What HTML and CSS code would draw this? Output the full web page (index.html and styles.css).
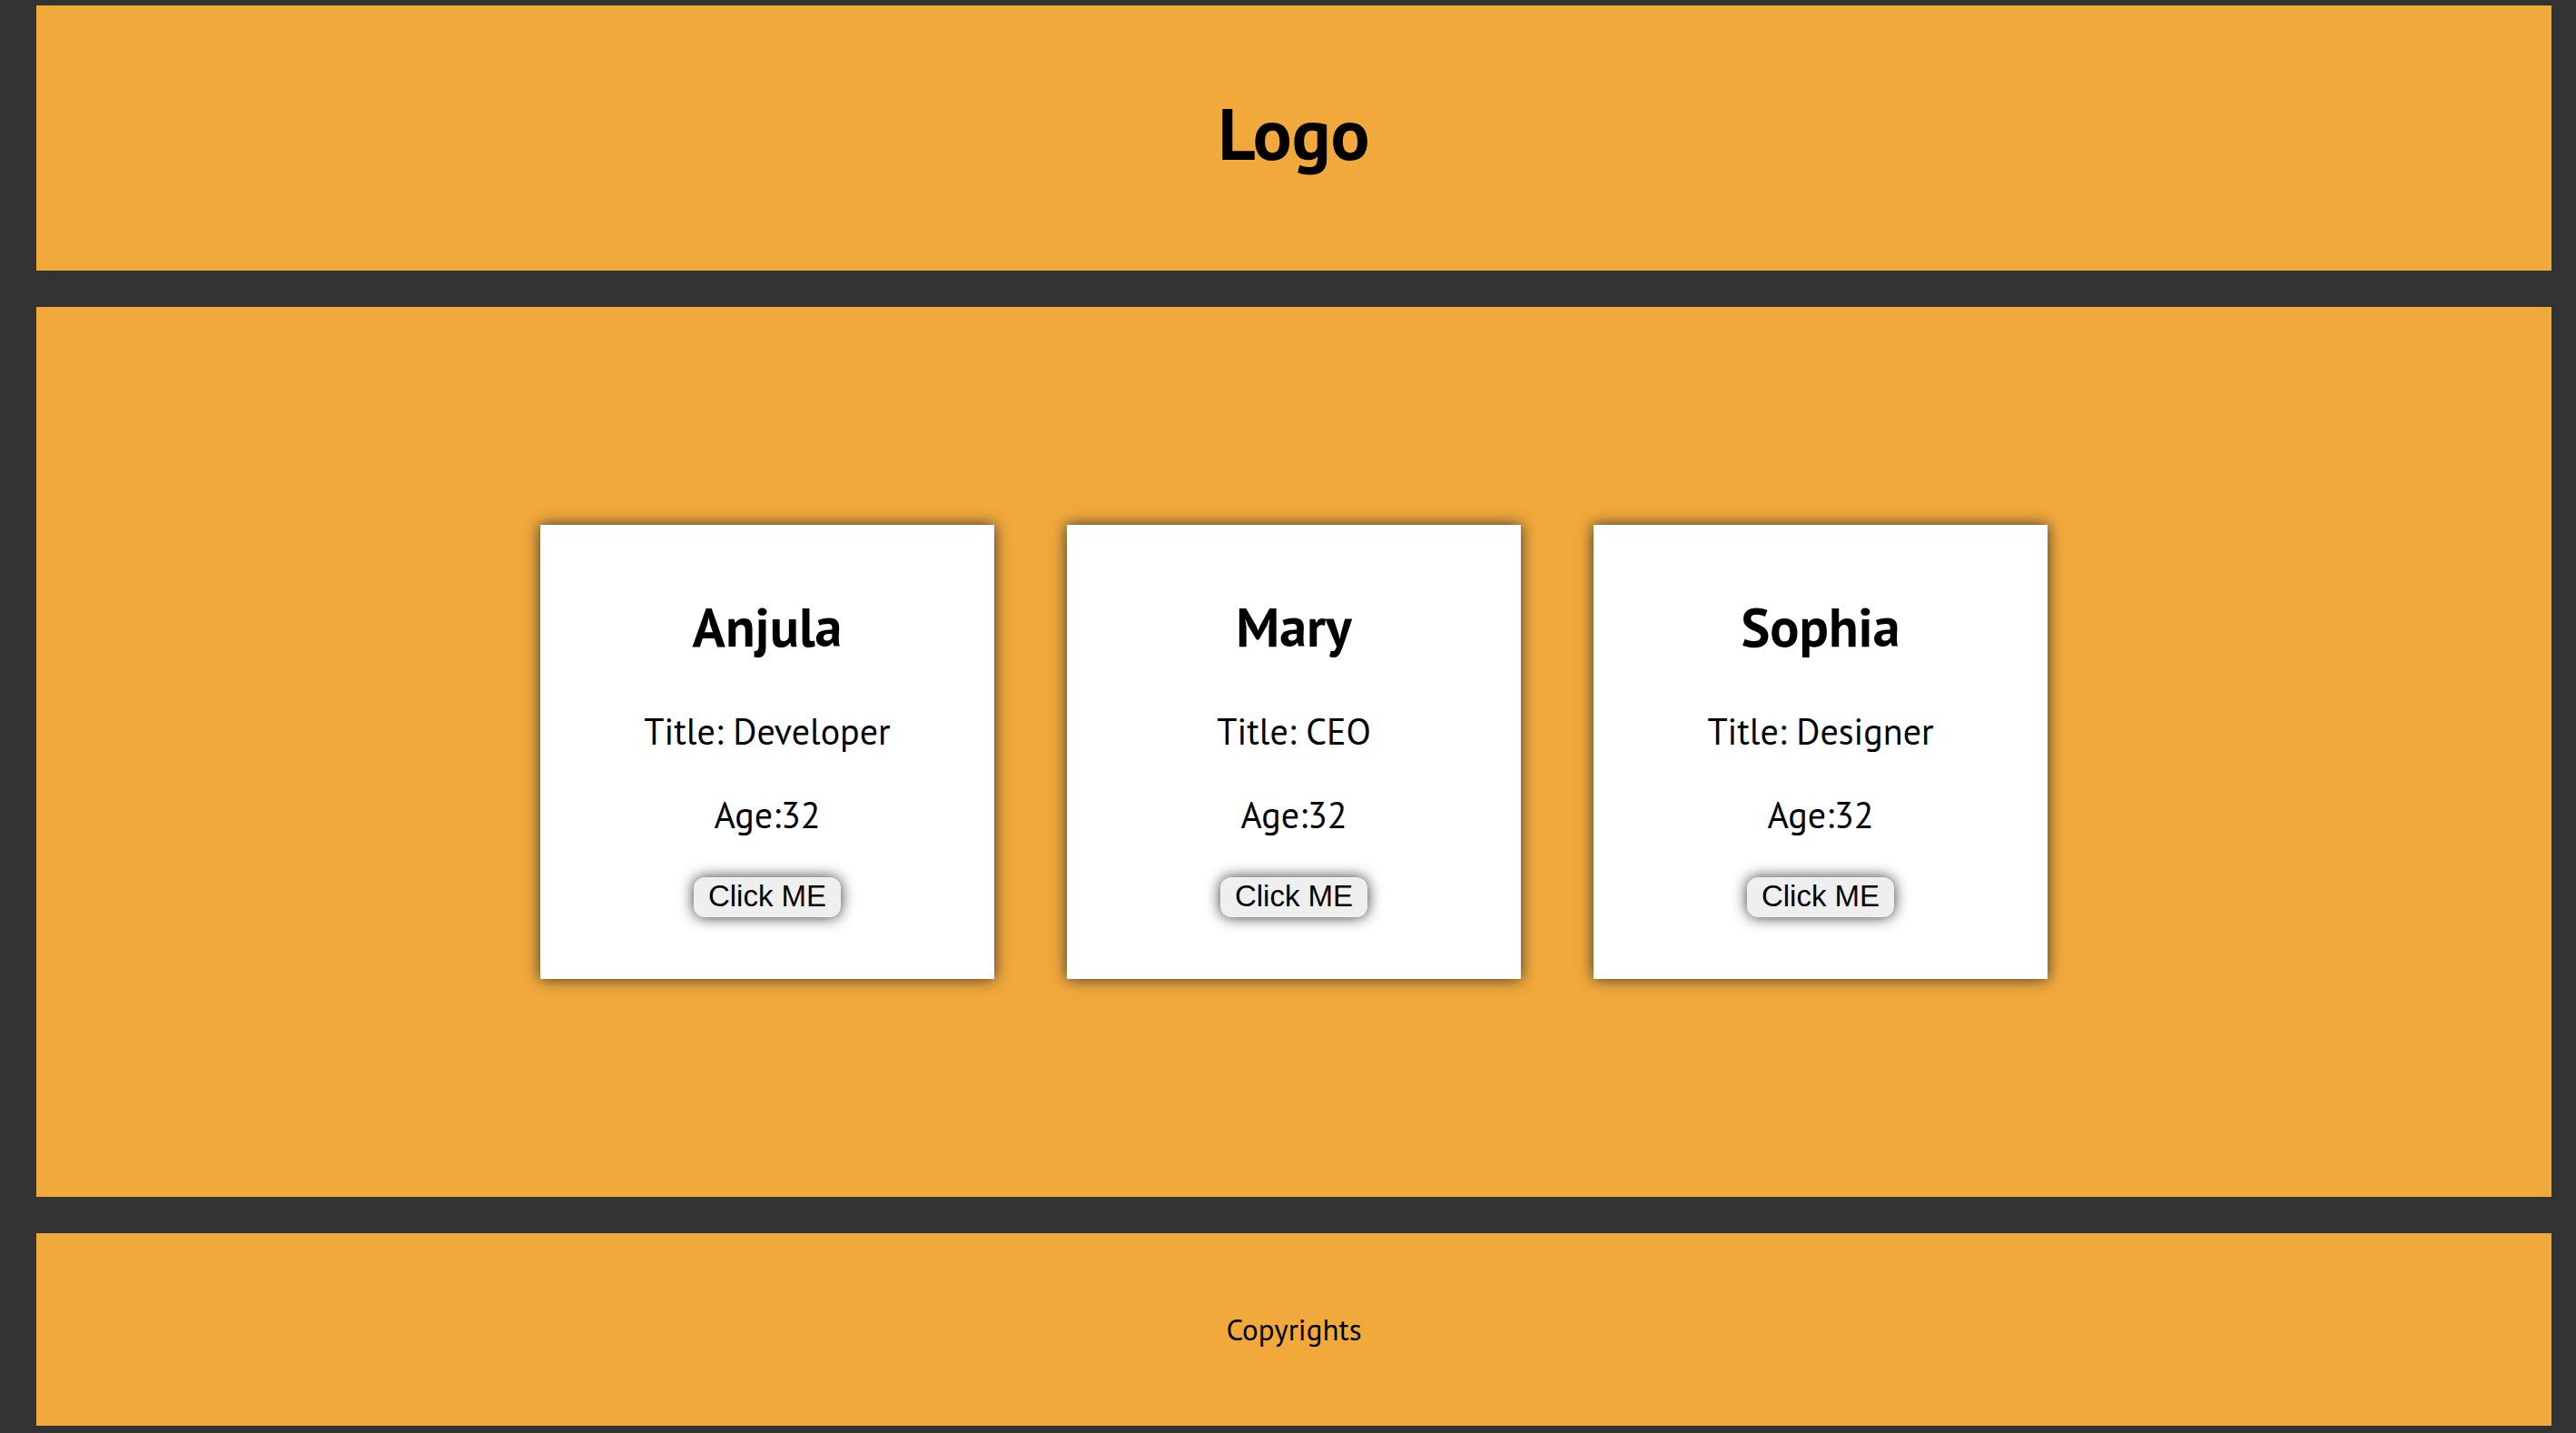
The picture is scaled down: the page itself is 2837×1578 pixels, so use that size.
FILE: index.html
```html
<!DOCTYPE html>
<html lang="en">
<head>
  <meta charset="utf-8">
  <meta name="viewport" content="width=device-width, initial-scale=1">
  <title>Team</title>
  <link rel="stylesheet" href="styles.css">
</head>
<body>
  <header class="site-header">
    <h1 class="logo">Logo</h1>
  </header>
  <main class="team">
    <article class="card">
      <h2 class="card-name">Anjula</h2>
      <p class="card-text">Title: Developer</p>
      <p class="card-text">Age:32</p>
      <button class="card-button" type="button">Click ME</button>
    </article>
    <article class="card">
      <h2 class="card-name">Mary</h2>
      <p class="card-text">Title: CEO</p>
      <p class="card-text">Age:32</p>
      <button class="card-button" type="button">Click ME</button>
    </article>
    <article class="card">
      <h2 class="card-name">Sophia</h2>
      <p class="card-text">Title: Designer</p>
      <p class="card-text">Age:32</p>
      <button class="card-button" type="button">Click ME</button>
    </article>
  </main>
  <footer class="site-footer">
    <p class="copyright">Copyrights</p>
  </footer>
</body>
</html>
```
FILE: styles.css
```css
* {
  box-sizing: border-box;
  margin: 0;
}

body {
  min-height: 100vh;
  display: grid;
  grid-template-rows: auto 1fr auto;
  gap: 40px;
  padding: 6px 27px 8px 40px;
  background: #333;
  color: #000;
  font-family: "PT Sans", Lato, sans-serif;
  text-align: center;
}

.site-header,
.team,
.site-footer {
  background: #f2a93b;
}

.site-header {
  padding: 91px 20px 101px;
}

.logo {
  font-size: 80px;
  line-height: 100px;
}

.team {
  display: flex;
  flex-wrap: wrap;
  justify-content: center;
  align-items: center;
  align-content: center;
  gap: 80px;
  padding: 80px 40px;
}

.card {
  display: flex;
  flex-direction: column;
  align-items: center;
  gap: 40px;
  width: 500px;
  min-height: 500px;
  padding: 72px 40px 60px;
  background: #fff;
  box-shadow: 0 0 16px #333;
}

.card-name {
  padding-bottom: 9px;
  font-size: 60px;
  line-height: 80px;
}

.card-text {
  font-size: 40px;
  line-height: 52px;
}

.card-button {
  margin-top: 3px;
  padding: 2px 16px 4px;
  border: 0;
  border-radius: 12px;
  background: #efefef;
  color: #000;
  font-family: "Liberation Sans", Arial, sans-serif;
  font-size: 33px;
  line-height: 38px;
  box-shadow: 0 0 16px #333;
}

.site-footer {
  padding: 86px 20px;
}

.copyright {
  font-size: 33px;
  line-height: 40px;
}
```
